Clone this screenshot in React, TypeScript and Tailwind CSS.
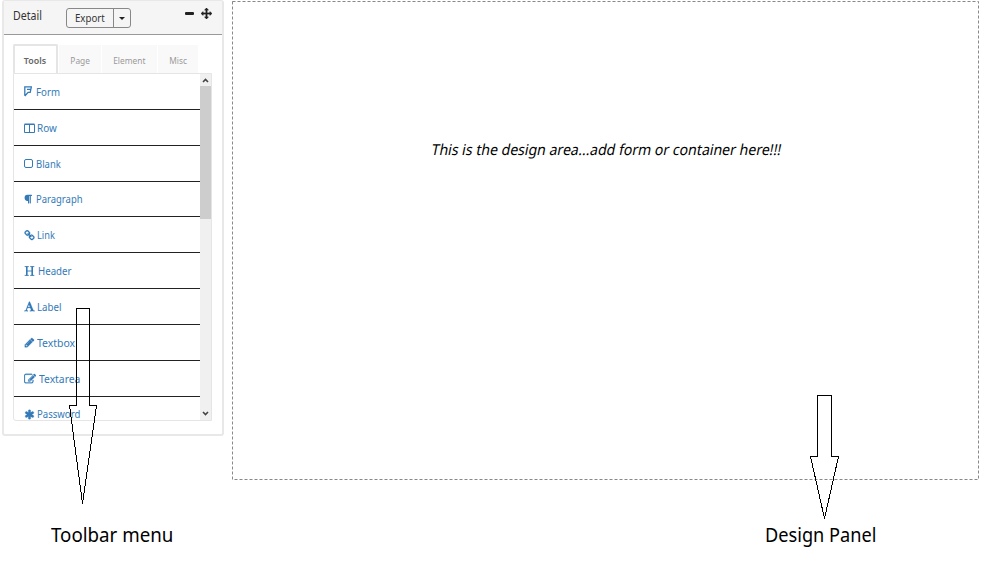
import type { ReactNode } from "react";
import { FaParagraph } from "react-icons/fa";

const PATHS = {
  move: "M1792 896q0 26-19 45l-256 256q-19 19-45 19t-45-19-19-45v-128h-384v384h128q26 0 45 19t19 45-19 45l-256 256q-19 19-45 19t-45-19l-256-256q-19-19-19-45t19-45 45-19h128v-384h-384v128q0 26-19 45t-45 19-45-19l-256-256q-19-19-19-45t19-45l256-256q19-19 45-19t45 19 19 45v128h384v-384h-128q-26 0-45-19t-19-45 19-45l256-256q19-19 45-19t45 19l256 256q19 19 19 45t-19 45-45 19h-128v384h384v-128q0-26 19-45t45-19 45 19l256 256q19 19 19 45z",
  link: "M1520 1216q0-40-28-68l-208-208q-28-28-68-28-42 0-72 32 3 3 19 18.5t21.5 21.5 15 19 13 25.5 3.5 27.5q0 40-28 68t-68 28q-15 0-27.5-3.5t-25.5-13-19-15-21.5-21.5-18.5-19q-33 31-33 73 0 40 28 68l206 207q27 27 68 27 40 0 68-26l147-146q28-28 28-67zm-703-705q0-40-28-68l-206-207q-28-28-68-28-39 0-68 27l-147 146q-28 28-28 67 0 40 28 68l208 208q27 27 68 27 42 0 72-31-3-3-19-18.5t-21.5-21.5-15-19-13-25.5-3.5-27.5q0-40 28-68t68-28q15 0 27.5 3.5t25.5 13 19 15 21.5 21.5 18.5 19q33-31 33-73zm895 705q0 120-85 203l-147 146q-83 83-203 83-121 0-204-85l-206-207q-83-83-83-203 0-123 88-209l-88-88q-86 88-208 88-120 0-204-84l-208-208q-84-84-84-204t85-203l147-146q83-83 203-83 121 0 204 85l206 207q83 83 83 203 0 123-88 209l88 88q86-88 208-88 120 0 204 84l208 208q84 84 84 204z",
  font: "M789 559l-170 450q33 0 136.5 2t160.5 2q19 0 57-2-87-253-184-452zm-725 1105l2-79q23-7 56-12.5t57-10.5 49.5-14.5 44.5-29 31-50.5l237-616 280-724h128q8 14 11 21l205 480q33 78 106 257.5t114 274.5q15 34 58 144.5t72 168.5q20 45 35 57 19 15 88 29.5t84 20.5q6 38 6 57 0 5-.5 13.5t-.5 12.5q-63 0-190-8t-191-8q-76 0-215 7t-178 8q0-43 4-78l131-28q1 0 12.5-2.5t15.5-3.5 14.5-4.5 15-6.5 11-8 9-11 2.5-14q0-16-31-96.5t-72-177.5-42-100l-450-2q-26 58-76.5 195.5t-50.5 162.5q0 22 14 37.5t43.5 24.5 48.5 13.5 57 8.5 41 4q1 19 1 58 0 9-2 27-58 0-174.5-10t-174.5-10q-8 0-26.5 4t-21.5 4q-80 14-188 14z",
  edit: "M888 1184l116-116-152-152-116 116v56h96v96h56zm440-720q-16-16-33 1l-350 350q-17 17-1 33t33-1l350-350q17-17 1-33zm80 594v190q0 119-84.5 203.5t-203.5 84.5h-832q-119 0-203.5-84.5t-84.5-203.5v-832q0-119 84.5-203.5t203.5-84.5h832q63 0 117 25 15 7 18 23 3 17-9 29l-49 49q-14 14-32 8-23-6-45-6h-832q-66 0-113 47t-47 113v832q0 66 47 113t113 47h832q66 0 113-47t47-113v-126q0-13 9-22l64-64q15-15 35-7t20 29zm-96-738l288 288-672 672h-288v-288zm444 132l-92 92-288-288 92-92q28-28 68-28t68 28l152 152q28 28 28 68t-28 68z",
  pencil: "M491 1536l91-91-235-235-91 91v107h128v128h107zm523-928q0-22-22-22-10 0-17 7l-542 542q-7 7-7 17 0 22 22 22 10 0 17-7l542-542q7-7 7-17zm-54-192l416 416-832 832h-416v-416zm683 96q0 53-37 90l-166 166-416-416 166-165q36-38 90-38 53 0 91 38l235 234q37 39 37 91z",
  asterisk: "M1546 1050q46 26 59.5 77.5t-12.5 97.5l-64 110q-26 46-77.5 59.5t-97.5-12.5l-266-153v307q0 52-38 90t-90 38h-128q-52 0-90-38t-38-90v-307l-266 153q-46 26-97.5 12.5t-77.5-59.5l-64-110q-26-46-12.5-97.5t59.5-77.5l266-154-266-154q-46-26-59.5-77.5t12.5-97.5l64-110q26-46 77.5-59.5t97.5 12.5l266 153v-307q0-52 38-90t90-38h128q52 0 90 38t38 90v307l266-153q46-26 97.5-12.5t77.5 59.5l64 110q26 46 12.5 97.5t-59.5 77.5l-266 154z",
};

function Glyph({ d, className }: { d: string; className: string }) {
  return (
    <svg viewBox="0 0 1792 1792" fill="currentColor" stroke="currentColor" strokeWidth="40" className={className}>
      <path d={d} />
    </svg>
  );
}

const FormIcon = () => (
  <svg viewBox="0 0 8 11" className="h-[11px] w-2" fill="none" stroke="currentColor" strokeWidth="1.3">
    <path d="M.8 9.8V.8h6.6L6.2 6.3H4.1L.8 10M3 3.3h3.7" />
  </svg>
);
const RowIcon = () => (
  <svg viewBox="0 0 11 10" className="h-2.5 w-[11px]" fill="none" stroke="currentColor">
    <path d="M.5 1h10M.5 1.5h10v8H.5zM5.5 1v8" />
  </svg>
);
const BlankIcon = () => (
  <svg viewBox="0 0 9 9" className="size-[9px]" fill="none" stroke="currentColor">
    <rect x=".5" y=".5" width="8" height="8" rx="1.5" />
  </svg>
);
const HeaderIcon = () => (
  <svg viewBox="0 0 11 10" className="h-2.5 w-[11px]" fill="none" stroke="currentColor">
    <path strokeWidth="1.6" d="M2.8 .5v9M8.2 .5v9" />
    <path strokeWidth=".9" d="M.7 .6h4.1M6.2 .6h4.1M.7 9.4h4.1M6.2 9.4h4.1M2.8 5h5.4" />
  </svg>
);

const TOOLS: { label: string; icon: ReactNode; width: string; scale: string }[] = [
  { label: "Form", icon: <FormIcon />, width: "w-[12px]", scale: "scale-x-[0.88]" },
  { label: "Row", icon: <RowIcon />, width: "w-[13px]", scale: "scale-x-[0.9]" },
  { label: "Blank", icon: <BlankIcon />, width: "w-[12px]", scale: "scale-x-[0.86]" },
  { label: "Paragraph", icon: <FaParagraph className="h-[10px] w-[8px]" preserveAspectRatio="none" />, width: "w-[11.5px]", scale: "scale-x-[0.86]" },
  { label: "Link", icon: <Glyph d={PATHS.link} className="size-[11px]" />, width: "w-[13px]", scale: "scale-x-[0.84]" },
  { label: "Header", icon: <HeaderIcon />, width: "w-[14px]", scale: "scale-x-[0.88]" },
  { label: "Label", icon: <Glyph d={PATHS.font} className="size-[11px]" />, width: "w-[13px]", scale: "scale-x-[0.88]" },
  { label: "Textbox", icon: <Glyph d={PATHS.pencil} className="size-[11px]" />, width: "w-[13px]", scale: "scale-x-[0.95]" },
  { label: "Textarea", icon: <Glyph d={PATHS.edit} className="size-[12px]" />, width: "w-[15px]", scale: "scale-x-[0.94]" },
  { label: "Password", icon: <Glyph d={PATHS.asterisk} className="size-[11px]" />, width: "w-[13px]", scale: "scale-x-[0.87]" },
];

function Toolbar() {
  return (
    <aside className="ml-0.5 h-[436px] w-[222px] shrink-0 rounded-[3px] border-2 border-t border-[#e8e8e8] bg-white">
      <header className="flex h-[34px] border-b border-[#999] bg-[#f5f5f5] text-[#333]">
        <div className="w-[54px] pt-[6px] pl-[9px] text-[12px] leading-[18px]">
          <span className="inline-block origin-left scale-x-[0.88]">Detail</span>
        </div>
        <div className="mt-[7px] ml-2 flex h-5 w-[65px] rounded-[3px] border border-[#888]">
          <div className="w-[47px] border-r border-[#888] pl-2 text-[11.5px] leading-[18px]">
            <span className="inline-block origin-left scale-x-[0.84]">Export</span>
          </div>
          <div className="flex flex-1 items-center justify-center">
            <svg viewBox="0 0 6 3" className="h-[3px] w-1.5" fill="#222"><path d="M0 0h6L3 3z" /></svg>
          </div>
        </div>
        <div className="ml-auto flex gap-[7px] pr-[10px] pt-[7px] text-[#222]">
          <div className="mt-[4px] h-[3px] w-[9px] rounded-[1px] bg-[#222]" />
          <Glyph d={PATHS.move} className="size-[11px]" />
        </div>
      </header>
      <nav className="ml-[9px] mt-[9px] flex h-[29px] items-end gap-px text-[9.5px] text-[#999]">
        <div className="h-[29px] w-[45px] rounded-t-[2px] border-2 border-b-0 border-[#e5e5e5] bg-white pr-px text-center leading-[29px] text-[#666]">
          <span className="inline-block scale-x-[0.93] font-semibold">Tools</span>
        </div>
        <div className="h-[28px] w-[42px] bg-[#f9f9f9] text-center leading-[31px]"><span className="inline-block scale-x-[0.88]">Page</span></div>
        <div className="h-[28px] w-[55px] bg-[#f9f9f9] text-center leading-[31px]"><span className="inline-block scale-x-[0.88]">Element</span></div>
        <div className="h-[28px] w-[40px] bg-[#f9f9f9] text-center leading-[31px]"><span className="inline-block scale-x-[0.88]">Misc</span></div>
      </nav>
      <div className="ml-[9px] flex h-[348px] w-[199px] overflow-hidden rounded-bl-[3px] border border-[#e5e5e5] bg-white">
        <div className="flex-1 overflow-hidden">
          {TOOLS.map((t) => (
            <div key={t.label} className="flex h-[35.85px] items-center border-b border-[#222] pt-px pl-2.5 text-[#337ab7] last:h-[34px] last:border-b-0">
              <div className={`flex shrink-0 items-center ${t.width}`}>{t.icon}</div>
              <span className={`inline-block origin-left text-[11px] leading-4 ${t.scale}`}>{t.label}</span>
            </div>
          ))}
        </div>
        <div className="flex w-[11px] flex-col items-center bg-[#f0f0f0]">
          <svg viewBox="0 0 11 12" className="h-3 w-[11px] shrink-0" fill="none" stroke="#444" strokeWidth="1.6"><path d="M3 8l2.5-2.5L8 8" /></svg>
          <div className="h-[133px] w-[11px] bg-[#cdcdcd]" />
          <svg viewBox="0 0 11 12" className="mt-auto h-3 w-[11px] shrink-0" fill="none" stroke="#444" strokeWidth="1.6"><path d="M3 4l2.5 2.5L8 4" /></svg>
        </div>
      </div>
    </aside>
  );
}

export default function App() {
  return (
    <div className="relative h-[571px] w-[982px] overflow-hidden bg-white font-['Noto_Sans',sans-serif]">
      <div className="flex gap-[8px]">
        <Toolbar />
        <main className="relative mt-px h-[479px] w-[747px]">
          <svg className="absolute inset-0 h-full w-full" fill="none" stroke="#888" strokeDasharray="3 2">
            <rect x=".5" y=".5" width="746" height="478" />
          </svg>
          <p className="pl-[200px] pt-[137px] text-[15px] leading-[22px]">
            <span className="inline-block origin-left scale-x-[0.938] -skew-x-12 whitespace-nowrap text-black">This is the design area...add form or container here!!!</span>
          </p>
        </main>
      </div>
      <div className="mt-[40px] flex h-[30px] text-[19.5px] leading-[30px] text-black">
        <div className="w-[714px] pl-[51px]"><span className="inline-block origin-left scale-x-[0.96]">Toolbar menu</span></div>
        <div className="pl-[51px]"><span className="inline-block origin-left scale-x-[0.932]">Design Panel</span></div>
      </div>
      <svg viewBox="0 0 982 571" className="pointer-events-none absolute inset-0 h-full w-full" fill="none" stroke="#000" shapeRendering="crispEdges">
        <path d="M76.5 308.5H89.5V405.5H96.5L82.5 503.5L69.5 405.5H76.5Z" />
        <path d="M817.5 395.5H831.5V456.5H838.5L824.5 518.5L810.5 456.5H817.5Z" />
      </svg>
    </div>
  );
}
